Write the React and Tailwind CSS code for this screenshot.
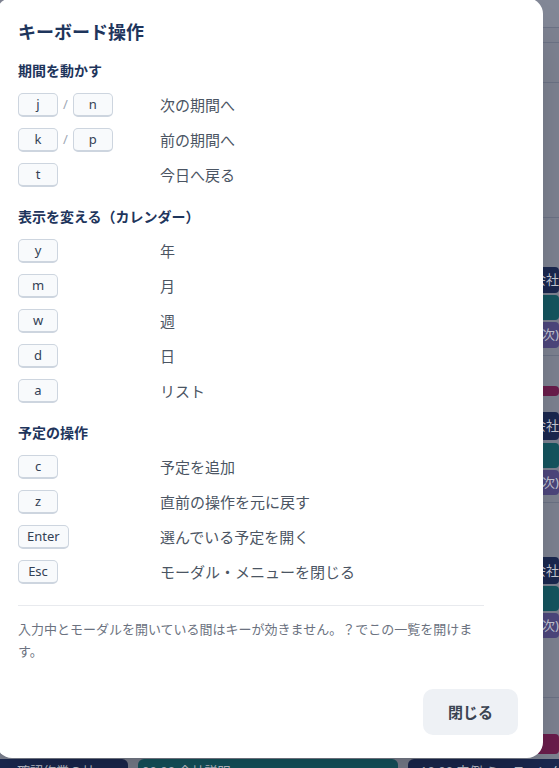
import React from 'react';

const font = { fontFamily: '"Noto Sans", "Noto Sans CJK JP", sans-serif' };

const sections = [
  {
    title: '期間を動かす',
    rows: [
      { keys: ['j', 'n'], label: '次の期間へ' },
      { keys: ['k', 'p'], label: '前の期間へ' },
      { keys: ['t'], label: '今日へ戻る' },
    ],
  },
  {
    title: '表示を変える（カレンダー）',
    rows: [
      { keys: ['y'], label: '年' },
      { keys: ['m'], label: '月' },
      { keys: ['w'], label: '週' },
      { keys: ['d'], label: '日' },
      { keys: ['a'], label: 'リスト' },
    ],
  },
  {
    title: '予定の操作',
    rows: [
      { keys: ['c'], label: '予定を追加' },
      { keys: ['z'], label: '直前の操作を元に戻す' },
      { keys: ['Enter'], label: '選んでいる予定を開く' },
      { keys: ['Esc'], label: 'モーダル・メニューを閉じる' },
    ],
  },
];

function Key({ children }) {
  return (
    <kbd
      className="flex h-6 min-w-[40px] items-center justify-center rounded-[5px] border border-b-2 border-[#cdd5df] bg-[#f8fafc] px-2 text-[13px] text-[#334155]"
      style={font}
    >
      {children}
    </kbd>
  );
}

function Bar({ color, text, h = 'h-[26px]' }) {
  return (
    <div className={`flex ${h} items-center justify-end overflow-hidden whitespace-nowrap rounded-sm ${color} text-[13px] text-[#c7cad6]`}>
      {text}
    </div>
  );
}

// calendar behind the backdrop, only the right strip and bottom row show
function Backdrop() {
  return (
    <div className="flex h-[768px] flex-col bg-[#7e8392]" style={font}>
      <div className="flex h-[759px]">
        <div className="flex-1" />
        <div className="flex w-[200px] flex-col">
          <div className="h-[27px] bg-[#838897]" />
          <div className="h-px bg-[#6c7386]" />
          <div className="h-[14px]" />
          <div className="h-px bg-[#6c7386]" />
          <div className="h-[39px]" />
          <div className="h-px bg-[#6c7386]" />
          <div className="h-[134px]" />
          <div className="h-px bg-[#6c7386]" />
          <div className="h-[49px]" />
          <Bar color="bg-[#1b2850]" text="株式会社" />
          <div className="h-[2px]" />
          <Bar color="bg-[#155660]" text="" h="h-[25px]" />
          <div className="h-[2px]" />
          <Bar color="bg-[#4e477e]" text="打合せ(次)" />
          <div className="h-[7px]" />
          <div className="h-px bg-[#6c7386]" />
          <div className="h-[30px]" />
          <Bar color="bg-[#6b1d4c]" text="" h="h-[10px]" />
          <div className="h-[16px]" />
          <Bar color="bg-[#1b2850]" text="株式会社" h="h-[28px]" />
          <div className="h-[3px]" />
          <Bar color="bg-[#155660]" text="" h="h-[25px]" />
          <div className="h-[2px]" />
          <Bar color="bg-[#4e477e]" text="打合せ(次)" h="h-[25px]" />
          <div className="h-[7px]" />
          <div className="h-px bg-[#6c7386]" />
          <div className="h-[54px]" />
          <Bar color="bg-[#1b2850]" text="株式会社" h="h-[27px]" />
          <div className="h-[2px]" />
          <Bar color="bg-[#155660]" text="" h="h-[25px]" />
          <div className="h-[2px]" />
          <Bar color="bg-[#4e477e]" text="打合せ(次)" h="h-[25px]" />
          <div className="h-[59px]" />
          <div className="h-px bg-[#6c7386]" />
          <div className="h-[36px]" />
          <Bar color="bg-[#6b1d4c]" text="" h="h-[20px]" />
        </div>
      </div>
      <div className="flex h-[9px] gap-[10px] overflow-visible">
        <div className="h-6 w-[128px] rounded-tr-md bg-[#1b2850] pl-1 pt-[2px] text-[13px] leading-5 text-[#c7cad6] whitespace-nowrap overflow-hidden">・確認作業の社</div>
        <div className="h-6 w-[260px] rounded-t-md bg-[#155660] pl-1 pt-[2px] text-[13px] leading-5 text-[#c7cad6] whitespace-nowrap overflow-hidden">09:00 会社説明</div>
        <div className="h-6 flex-1 rounded-tl-md bg-[#1b2850] pl-3 pt-[2px] text-[13px] leading-5 text-[#c7cad6] whitespace-nowrap overflow-hidden">10:00 定例 ミーティング会社</div>
      </div>
    </div>
  );
}

export default function App() {
  return (
    <div className="relative h-[768px] w-full overflow-hidden" style={font}>
      <Backdrop />

      {/* Modal */}
      <div className="absolute left-[-4px] top-[-2px] flex w-[547px] flex-col rounded-2xl bg-white pb-[23px] pl-[22px] pr-[25px] pt-5 shadow-2xl">
        <div className="mr-[34px]">
          <h2 className="text-[18px] font-bold leading-7 text-[#1e355c]">キーボード操作</h2>

          {sections.map((section, i) => (
            <div key={section.title} className={i === 0 ? 'mt-[15px]' : 'mt-5'}>
              <h3 className="text-[14px] font-bold leading-5 text-[#1e355c]">{section.title}</h3>
              <div className="mt-3 flex flex-col gap-[11px]">
                {section.rows.map((row) => (
                  <div key={row.label} className="flex h-6 items-center">
                    <div className="flex w-[142px] items-center">
                      {row.keys.map((k, j) => (
                        <React.Fragment key={k}>
                          {j > 0 && <span className="mx-[5px] text-[13px] text-[#a0a8b5]">/</span>}
                          <Key>{k}</Key>
                        </React.Fragment>
                      ))}
                    </div>
                    <span className="text-[15px] text-[#4b5563]">{row.label}</span>
                  </div>
                ))}
              </div>
            </div>
          ))}

          <div className="mt-[21px] border-t border-[#e8eaee]" />
          <p className="mt-3 text-[13px] leading-[22px] text-[#6b7280]">
            入力中とモーダルを開いている間はキーが効きません。？でこの一覧を開けます。
          </p>
        </div>

        <div className="mt-[27px] flex justify-end">
          <button className="h-[46px] w-[95px] rounded-[10px] bg-[#eef1f5] text-[15px] font-bold text-[#3b4452]">
            閉じる
          </button>
        </div>
      </div>
    </div>
  );
}
